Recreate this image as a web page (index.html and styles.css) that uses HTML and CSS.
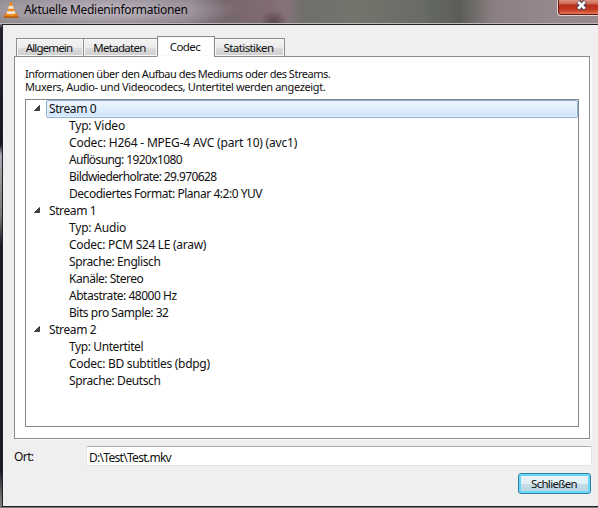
FILE: index.html
```html
<!DOCTYPE html>
<html lang="de">
<head>
<meta charset="utf-8">
<title>Aktuelle Medieninformationen</title>
<link rel="stylesheet" href="styles.css">
</head>
<body>
<div class="window">
  <header class="titlebar">
    <svg class="cone" width="16" height="18" viewBox="0 0 16 18">
      <path d="M2.5 12h11l2 4.5H.5z" fill="#e77a13"/>
      <path d="M1 15.4h14l.6 1.4H.4z" fill="#a9540e"/>
      <path d="M7 1.5h2L13 14q-5 2-10 0z" fill="#ef8a1c"/>
      <path d="M6 4.7h4l1 3.1H5zM4.2 10.2h7.6l.8 2.4q-4.600 1.500-9.200 0z" fill="#eee6df"/>
    </svg>
    <span class="caption">Aktuelle Medieninformationen</span>
    <button class="close" aria-label="Schließen">
      <svg width="13" height="11" viewBox="0 0 13 11"><path d="M3 1.500L10 9M10 1.500L3 9" stroke="#5b4a55" stroke-width="5"/><path d="M3.200 1.800L9.800 8.700M9.800 1.800L3.200 8.700" stroke="#fff" stroke-width="2.600"/></svg>
    </button>
  </header>
  <main class="client">
    <nav class="tabs">
      <span class="tab general">Allgemein</span>
      <span class="tab meta">Metadaten</span>
      <span class="tab codec active">Codec</span>
      <span class="tab stats">Statistiken</span>
    </nav>
    <section class="pane">
      <div class="intro"><div class="i1">Informationen über den Aufbau des Mediums oder des Streams.</div><div class="i2">Muxers, Audio- und Videocodecs, Untertitel werden angezeigt.</div></div>
      <ul class="tree">
        <li class="node selected"><svg class="arrow" viewBox="0 0 6 6"><path d="M5.500.5v5H.5z"/></svg><span class="label">Stream 0</span></li>
        <li class="leaf wide">Typ: Video</li>
        <li class="leaf wide">Codec: H264 - MPEG-4 AVC (part 10) (avc1)</li>
        <li class="leaf narrow">Auflösung: 1920x1080</li>
        <li class="leaf narrow">Bildwiederholrate: 29.970628</li>
        <li class="leaf snug">Decodiertes Format: Planar 4:2:0 YUV</li>
        <li class="node"><svg class="arrow" viewBox="0 0 6 6"><path d="M5.500.5v5H.5z"/></svg><span class="label">Stream 1</span></li>
        <li class="leaf wide">Typ: Audio</li>
        <li class="leaf loose">Codec: PCM S24 LE (araw)</li>
        <li class="leaf">Sprache: Englisch</li>
        <li class="leaf snug">Kanäle: Stereo</li>
        <li class="leaf snug">Abtastrate: 48000 Hz</li>
        <li class="leaf snug">Bits pro Sample: 32</li>
        <li class="node"><svg class="arrow" viewBox="0 0 6 6"><path d="M5.500.5v5H.5z"/></svg><span class="label">Stream 2</span></li>
        <li class="leaf">Typ: Untertitel</li>
        <li class="leaf loose">Codec: BD subtitles (bdpg)</li>
        <li class="leaf">Sprache: Deutsch</li>
      </ul>
    </section>
    <div class="location"><span class="ort">Ort:</span><div class="field">D:\Test\Test.mkv</div></div>
    <div class="actions"><button class="default">Schließen</button></div>
  </main>
</div>
</body>
</html>
```
FILE: styles.css
```css
* { box-sizing: border-box; }
body { margin: 0; width: 598px; height: 508px; overflow: hidden; font: 12px/17px "Noto Sans", sans-serif; letter-spacing: -0.4px; color: #111; white-space: nowrap; }
.window { width: 598px; height: 508px; padding: 0 0 1px 2px; background: linear-gradient(#8b858b 0, #8b858b 24px, #24212a 28px, #141820 145px, #a9abb0 155px, #777 215px, #171b22 245px, #171b22 470px, #777 500px); }
.titlebar { display: flex; align-items: flex-start; height: 24px; margin-left: -2px; padding-left: 3px; border-bottom: 1px solid #bcb7ba; background:
  radial-gradient(ellipse 135px 18px at 105px 10px, rgba(190,181,192,.85) 20%, transparent),
  radial-gradient(ellipse 14px 12px at 274px 22px, #5c464e, transparent),
  linear-gradient(90deg, #918b91 0, #898087 190px, #77666d 225px, #806b73 268px, #85727a 285px, #6d706b 305px, #72756c 355px, #686c65 420px, #5b5d59 460px, #8a7e80 492px, #94878a 540px, #99888e 598px); }
.cone { flex: none; margin-top: 1px; }
.caption { margin-left: 5px; font-size: 12px; line-height: 20px; letter-spacing: -0.3px; color: #080808; }
.close { width: 46px; height: 16px; margin: 0 -5px 0 auto; padding: 0 0 4px 2px; border: 1px solid #ead2ce; border-top: 0; border-radius: 0 0 4px 4px; background: linear-gradient(#dc9380 0, #cd6650 4px, #b52e1b 5px, #c53b24 10px, #ec8a63 15px); box-shadow: inset 1px -1px #5c1d1c; display: flex; align-items: center; justify-content: center; }
.client { height: 483px; padding: 11px 6px 0 11px; background: #efefef; border: solid #24212a; border-width: 1px 0 1px 1px; }
.tabs { display: flex; align-items: flex-end; height: 21px; margin-bottom: -1px; padding-left: 2px; position: relative; font-size: 11.5px; }
.tab { height: 19px; margin-right: -1px; padding-right: 2px; text-align: center; border: 1px solid #898c95; background: linear-gradient(#f3f3f3, #ebebeb 50%, #dcdcdc 52%, #cfcfcf); box-shadow: inset 0 0 0 1px #f7f7f7; }
.general { width: 68px; letter-spacing: -0.85px; }
.meta { width: 75px; letter-spacing: -0.7px; }
.codec { width: 58px; letter-spacing: -0.6px; }
.stats { width: 71px; letter-spacing: -0.6px; }
.tab.active { height: 21px; padding-top: 1px; background: #fff; border-bottom-color: #fff; }
.pane { width: 576px; height: 383px; padding: 10px 10px 0; background: #fff; border: 1px solid #898c95; box-shadow: 2px 1px #fafafa; }
.intro { height: 32px; font-size: 11px; line-height: 13px; }
.i1 { letter-spacing: -0.48px; }
.i2 { letter-spacing: -0.36px; }
.tree { width: 554px; height: 328px; margin: 0; padding: 0; list-style: none; border: 1px solid #828790; }
.node { display: flex; align-items: center; height: 17px; padding-left: 8px; }
.arrow { width: 6px; height: 6px; margin: -1px 6px 0 0; fill: #484848; stroke: #222; stroke-width: .8; }
.label { flex: 1; height: 17px; padding-left: 3px; }
.selected .label { height: 18px; line-height: 15px; border: 1px solid #8db2d6; border-radius: 2px; padding-left: 2px; background: linear-gradient(#eff7fe, #cfe3fb); box-shadow: inset 0 0 0 1px #e5f1fc; }
.leaf { height: 17px; padding-left: 43px; }
.wide { letter-spacing: -0.2px; }
.loose { letter-spacing: -0.3px; }
.snug { letter-spacing: -0.47px; }
.narrow { letter-spacing: -0.61px; }
.location { display: flex; align-items: center; height: 20px; margin-top: 7px; }
.ort { width: 72px; letter-spacing: -0.6px; }
.field { width: 506px; height: 20px; padding: 2px 0 0 2px; line-height: 17px; letter-spacing: -0.7px; background: #fff; border: 1px solid #e2e3ea; border-top-color: #abadb3; border-radius: 2px; }
.actions { display: flex; justify-content: flex-end; margin: 7px 1px 0 0; }
.default { width: 73px; height: 21px; padding: 0 1px 0 0; font: inherit; font-size: 11.5px; letter-spacing: -0.7px; color: inherit; border: 1px solid #2c7fa6; border-radius: 3px; background: linear-gradient(#edf5f9, #e0eef5 50%, #c7dce7 52%, #b9d4e2); box-shadow: inset 0 0 0 2px #68d8f6; }
```
